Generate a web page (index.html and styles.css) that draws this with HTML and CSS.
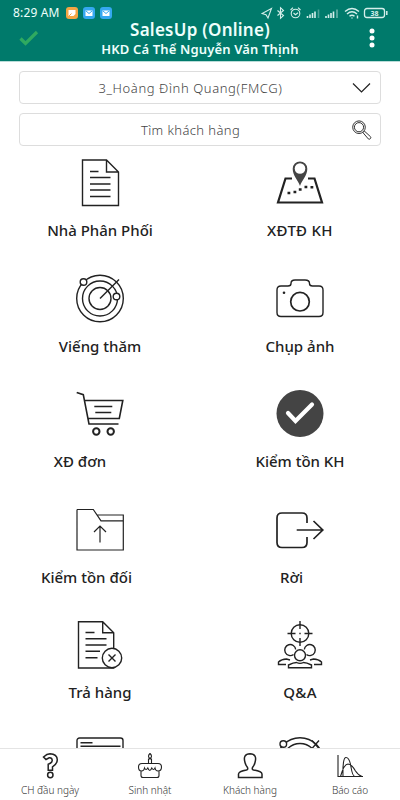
FILE: index.html
```html
<!DOCTYPE html>
<html lang="vi">
<head>
    <meta charset="UTF-8" />
    <meta name="viewport" content="width=device-width, initial-scale=1" />
    <title>SalesUp</title>
    <link rel="stylesheet" href="styles.css">
</head>
<body>
    <header class="header">
        <div class="status">
            <span class="time">8:29 AM</span>
            <span class="app orange"><svg width="12" height="12" viewBox="0 0 12 12"><path d="M2.5 3h7v4l-2 2h-5z" fill="#fff"/><path d="M2.500 9.500l3-3" stroke="#f2a545"/></svg></span>
            <span class="app blue"><svg width="12" height="12" viewBox="0 0 12 12"><path d="M2.5 3.5h7v5.5h-7z" fill="#fff"/><path d="M3 4l3 2.5L9 4" fill="none" stroke="#35a8f0"/></svg></span>
            <span class="app blue"><svg width="12" height="12" viewBox="0 0 12 12"><path d="M2.5 3.5h7v5.5h-7z" fill="#fff"/><path d="M3 4l3 2.5L9 4" fill="none" stroke="#35a8f0"/></svg></span>
            <svg class="system" width="128" height="14" viewBox="0 0 128 14" fill="none" stroke="#d5efeb" stroke-width="1.1">
                <path d="M10.5 2.5L1 7.5l4 1.2L7 12z"/>
                <path d="M16.5 4.5l6 5-3 2.8V1.7l3 2.8-6 5"/>
                <circle cx="34.5" cy="7.5" r="4.3"/><path d="M32.5 7l2 1.7 2.5-2M29.5 4L32 1.7M39.5 4L37 1.7"/>
                <path d="M46.5 12v-2M49 12V8.5M51.5 12V7M54 12V5.500" stroke-width="1.6"/><path d="M57.500 12V3.500" stroke-width="1.6" opacity=".35"/>
                <path d="M65 12v-2M67.5 12V8.5M70 12V7M72.5 12V5.500" stroke-width="1.6"/><path d="M76 12V3.500" stroke-width="1.6" opacity=".5"/>
                <path d="M84 5.5q7-6 14 0M86 8q5-4.500 10 0M88.500 10.300q2.500-2.300 5 0" stroke-width="1.4"/><path d="M91 11.500v1M96.500 9.500v3" stroke-width="1.4"/>
                <rect x="103.500" y="2.500" width="20" height="9" rx="2.5" stroke-width="1.3"/><path d="M125.800 5v4" stroke-width="1.5"/>
                <text class="battery" x="113.500" y="10" text-anchor="middle">38</text>
            </svg>
        </div>
        <svg class="online" width="20" height="16" viewBox="0 0 20 16"><path d="M1.500 8.500l5 5L18 2" fill="none" stroke="#2faa60" stroke-width="3.2"/></svg>
        <div class="titles">
            <h1>SalesUp (Online)</h1>
            <h2>HKD Cá Thể Nguyễn Văn Thịnh</h2>
        </div>
        <svg class="more" width="6" height="20" viewBox="0 0 6 20" fill="#fff"><circle cx="3" cy="3" r="2.5"/><circle cx="3" cy="10" r="2.5"/><circle cx="3" cy="17" r="2.5"/></svg>
    </header>

    <div class="filters">
        <div class="field">
            <span class="staff">3_Hoàng Đình Quang(FMCG)</span>
            <svg width="20" height="20" viewBox="0 0 20 20" fill="none" stroke="#222" stroke-width="1.2"><path d="M1 5.500l8.500 8.500L18 5.500"/></svg>
        </div>
        <div class="field">
            <span class="search">Tìm khách hàng</span>
            <svg width="20" height="20" viewBox="0 0 20 20" fill="none" stroke="#333"><circle cx="7" cy="7.200" r="6.300"/><circle cx="7" cy="7.200" r="4.600"/><path d="M11 12.700l1.500-1.500 6 5.500q.8 1-.2 2t-2 .2z"/></svg>
        </div>
    </div>

    <main class="menu">
        <div class="item">
            <svg class="icon" viewBox="0 0 48 48"><path d="M6.500 1h24l12 12v33.500h-36zM30.500 1v12h12M14 12.500h8.500M14 18.500h20.500M14 25h20.500M14 31h20.500M14 37.500h20.500"/></svg>
            <span class="label">Nhà Phân Phối</span>
        </div>
        <div class="item">
            <svg class="icon" viewBox="0 0 48 48">
                <path d="M16 19.500H9.500L2 43.500h44L38.500 19.500H32" stroke-width="2.2"/>
                <path d="M24 27C22 21 16.700 16.500 16.700 9.700a7.300 7.300 0 0 1 14.600 0C31.300 16.500 26 21 24 27z" fill="#444" stroke="none"/><circle cx="24" cy="9.500" r="5.300" fill="#fff" stroke="none"/>
                <path d="M11.500 34h2.800M17.500 33h2.800M22.800 30.500h2.800M28.500 28h2.800M34.500 28.200h2.800" stroke-width="2.4"/>
            </svg>
            <span class="label wide">XĐTĐ KH</span>
        </div>
        <div class="item">
            <svg class="icon" viewBox="0 0 48 48"><circle cx="24" cy="23.500" r="23.300"/><circle cx="24" cy="23.500" r="17.500"/><circle cx="24" cy="23.500" r="11"/><path d="M24 23.500L43 4.500"/><circle cx="7.500" cy="7" r="3.300" fill="#fff"/><circle cx="40.500" cy="21.500" r="3.300" fill="#fff"/></svg>
            <span class="label">Viếng thăm</span>
        </div>
        <div class="item">
            <svg class="icon" viewBox="0 0 48 48"><path d="M5 11h7q3 0 3-2.500Q15 5 19 5h10q4.500 0 4.500 3.500 0 2.500 3 2.500H43q4 0 4 4v22.500q0 4-4 4H5q-4 0-4-4V15q0-4 4-4z"/><circle cx="24" cy="26.700" r="9.300" stroke-width="1.7"/><circle cx="8" cy="17.700" r="1.300" fill="#222" stroke="none"/></svg>
            <span class="label">Chụp ảnh</span>
        </div>
        <div class="item">
            <svg class="icon" viewBox="0 0 48 48"><path d="M.7 2.500l6.600 2.200L13 34h29.500M8.300 10.500h38.500l-3.500 18h-31M18.300 16.500h18M19.300 22.500h16" stroke-width="1.6"/><g stroke-width="2"><circle cx="20.300" cy="41.500" r="3.200"/><circle cx="34.700" cy="41.500" r="3.200"/></g></svg>
            <span class="label order">XĐ đơn</span>
        </div>
        <div class="item">
            <svg class="icon" viewBox="0 0 48 48"><circle cx="24" cy="23.500" r="23.500" fill="#444" stroke="none"/><path d="M12 23l7.500 8L36 14.500" stroke="#fff" stroke-width="4.2" stroke-linecap="round"/></svg>
            <span class="label">Kiểm tồn KH</span>
        </div>
        <div class="item">
            <svg class="icon" viewBox="0 0 48 48"><path d="M1 3.500h16.300L25 14.800h22.300M21 9h26.300v35H1V3.500M24 36.500V20M18 26l6-6 6 6" stroke-width="1.2"/></svg>
            <span class="label rival">Kiểm tồn đối</span>
        </div>
        <div class="item">
            <svg class="icon" viewBox="0 0 48 48"><path d="M31 17v-5q0-5-5-5H6q-5 0-5 5v24.500q0 5 5 5h20q5 0 5-5v-5.500M20.700 24h26M37.500 15l9.300 9-9.300 9" stroke-width="1.7"/></svg>
            <span class="label leave">Rời</span>
        </div>
        <div class="item">
            <svg class="icon" viewBox="0 0 48 48"><path d="M2.500.7h24.200l11 11V47H2.500zM26.700.7v11h11M9.500 11.500h9M9.500 17.700h21M9.500 24h21M9.500 30.300H24M9.500 36.700h12"/><circle cx="36" cy="37" r="9.700" fill="#fff"/><path d="M32.500 33.500l7 7M39.500 33.500l-7 7"/></svg>
            <span class="label">Trả hàng</span>
        </div>
        <div class="item">
            <svg class="icon" viewBox="0 0 48 48"><circle cx="24" cy="12.500" r="8.800"/><path d="M24 0v8M24 17v8M11.500 12.500h8M28.500 12.500h8M23.300 12.500h1.400"/><path d="M17.500 33.500a5.500 5.500 0 1 1 2.200-5M30.500 33.500a5.500 5.500 0 1 0-2.200-5"/><circle cx="24" cy="34.300" r="5.500"/><path d="M12.500 46.800V44q5-2.500 8-2.500 3.500 1.800 7 0 3 0 8 2.500v2.800zM10 43.500H2.500V41q3-2.800 8-3l3.500 1M38 43.500h7.500V41q-3-2.800-8-3L34 39"/></svg>
            <span class="label wide">Q&amp;A</span>
        </div>
        <div class="item">
            <svg class="icon" viewBox="0 0 48 48"><rect x="1" y="1" width="46" height="40" rx="2.500"/><path d="M4.500 5.700h12M4.500 9.300h40"/></svg>
        </div>
        <div class="item">
            <svg class="icon" viewBox="0 0 48 48"><circle cx="24" cy="24" r="23.200"/><circle cx="24" cy="24" r="17.500"/><circle cx="7.300" cy="7" r="3.300" fill="#fff"/><path d="M36 3.500l7 8M43 3.500l-7 8"/></svg>
        </div>
    </main>

    <nav class="tabs">
        <div class="tab">
            <svg class="tab-icon" viewBox="0 0 26 26"><path d="M6.500 4Q10 .8 13 .8q7 .2 7.300 6 0 4-4.800 7v3.500h-4.300v-6q4.300-1.500 4-4.300-.3-2.500-3-2.200L9 6.500z"/><circle cx="13.300" cy="22" r="2.700"/></svg>
            <span>CH đầu ngày</span>
        </div>
        <div class="tab">
            <svg class="tab-icon" viewBox="0 0 26 26"><path d="M11.500 11V6h3v5M13 5.500q-3-2 0-5 3 3 0 5M5 10.500h16q3.500 0 3.500 3.500 0 4-3.500 4-2.500 0-3-3-1.500 3-3.200 0-2 5-4 0-1.800 3-3.300 0-.5 3-3 3Q1.500 18 1.500 14q0-3.500 3.500-3.500zM4 18v4.500q0 2 2 2h14q2 0 2-2V18" stroke-width="1.1"/></svg>
            <span>Sinh nhật</span>
        </div>
        <div class="tab">
            <svg class="tab-icon" viewBox="0 0 26 26"><path d="M10.500 14.500Q8.500 12 8 9.500 5.500 1 13 .8q7.500.2 5 8.700-.5 2.500-2.500 5-.8 2 1 2.500Q24.700 18.300 25 21v3.500H1.500V21q.3-2.700 8-4 1.800-.5 1-2.500z"/></svg>
            <span>Khách hàng</span>
        </div>
        <div class="tab">
            <svg class="tab-icon" viewBox="0 0 26 26"><path d="M1 2v21.500h25M3.500 23.500Q7 11 11 11q4 .5 7.500 7 3 4.500 6.500 5.500M6 23.500Q5.500 4.500 9 4.500q3.500 0 5 9.500t4 9.500" stroke-width="1.100"/></svg>
            <span>Báo cáo</span>
        </div>
    </nav>
</body>
</html>
```
FILE: styles.css
```css
* {
    box-sizing: border-box;
}
body {
    margin: 0;
    height: 800px;
    display: flex;
    flex-direction: column;
    overflow: hidden;
    background: #fff;
    color: #222;
    font-family: 'Noto Sans', sans-serif;
}
svg {
    display: block;
    flex: none;
}
.header {
    height: 62px;
    flex: none;
    display: grid;
    grid-template-columns: 50px 1fr 50px;
    grid-template-rows: 20px 41px;
    justify-items: center;
    background: #007a6b;
    border-bottom: 1px solid #b9dcd8;
    color: #eefffc;
}
.status {
    grid-column: 1 / 4;
    width: 100%;
    display: flex;
    align-items: center;
    gap: 5px;
    padding: 6px 11px 0 13px;
}
.time {
    width: 48px;
    font-size: 12px;
    letter-spacing: 0.15px;
    line-height: 14px;
    white-space: nowrap;
}
.app {
    width: 12px;
    height: 12px;
    border-radius: 3px;
}
.orange {
    background: #f2a545;
}
.blue {
    background: #35a8f0;
}
.system {
    margin-left: auto;
}
.battery {
    font-size: 7px;
    font-weight: bold;
    fill: #d5efeb;
    stroke: none;
}
.online {
    margin: 10px 0 0 7px;
}
.titles {
    text-align: center;
    white-space: nowrap;
}
h1 {
    margin: 0;
    font-size: 17px;
    letter-spacing: 0.25px;
    line-height: 20px;
    font-weight: 600;
}
h2 {
    margin: 0;
    font-size: 13px;
    letter-spacing: 0.15px;
    line-height: 19px;
    font-weight: 600;
}
.more {
    margin: 8px 7px 0 0;
}
.filters {
    padding: 9px 19px 0;
    display: flex;
    flex-direction: column;
    gap: 9px;
    flex: none;
}
.field {
    height: 33px;
    display: flex;
    align-items: center;
    border: 1px solid #ddd;
    border-radius: 4px;
    padding: 0 8px 0 9px;
    color: #444;
    font-size: 13px;
    font-weight: 300;
}
.field span {
    flex: 1;
    text-align: center;
}
.staff {
    letter-spacing: 0.6px;
}
.search {
    letter-spacing: 0.4px;
}
.menu {
    flex: 1;
    min-height: 0;
    overflow: hidden;
    padding-top: 13px;
    display: grid;
    grid-template-columns: 1fr 1fr;
    grid-auto-rows: 115.5px;
}
.item {
    display: flex;
    flex-direction: column;
    align-items: center;
}
.icon {
    width: 48px;
    height: 48px;
    overflow: visible;
    fill: none;
    stroke: #222;
    stroke-width: 1.4;
}
.label {
    margin-top: 12px;
    font-size: 15px;
    line-height: 22px;
    font-weight: 500;
    white-space: nowrap;
}
.wide {
    letter-spacing: 0.3px;
}
/* short captions sit left of their icon */
.order {
    margin-right: 40px;
}
.rival {
    margin-right: 27px;
}
.leave {
    margin-right: 17px;
}
.tabs {
    height: 52px;
    flex: none;
    display: grid;
    grid-template-columns: repeat(4, 1fr);
    border-top: 1px solid #e4e4e4;
    background: #fff;
}
.tab {
    display: flex;
    flex-direction: column;
    align-items: center;
    padding-top: 4px;
    font-size: 10px;
    font-weight: 300;
    line-height: 14px;
    color: #333;
    white-space: nowrap;
}
.tab-icon {
    width: 26px;
    height: 26px;
    margin-bottom: 4px;
    fill: none;
    stroke: #222;
    stroke-width: 1.5;
}
```
